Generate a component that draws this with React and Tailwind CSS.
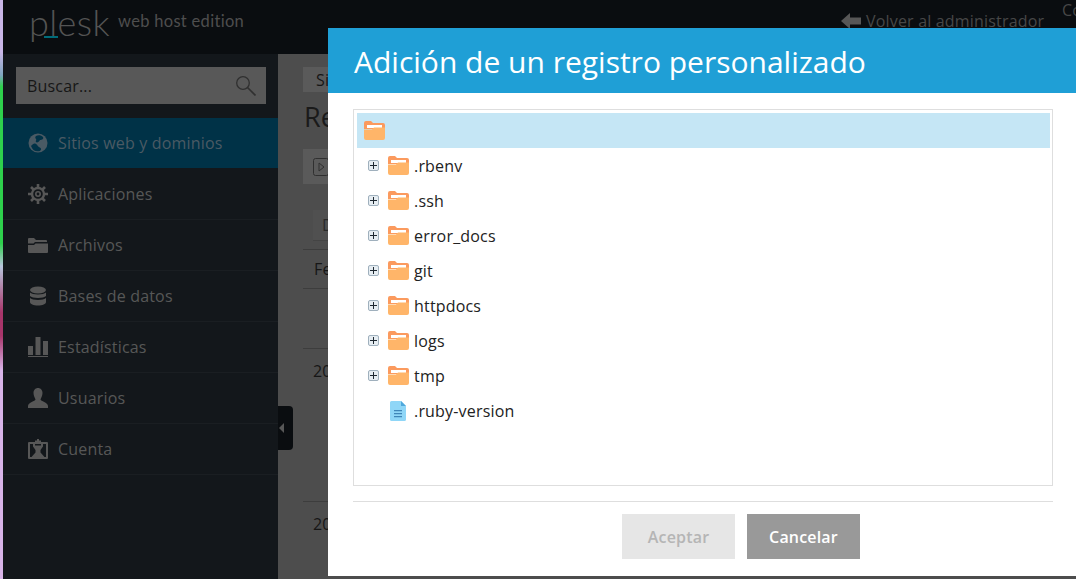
import React from 'react';

const SearchIcon = () => (
  <svg viewBox="0 0 20 20" className="h-5 w-5" fill="none" stroke="#303030">
    <circle cx="7" cy="7" r="6.300" strokeWidth="1.300" />
    <path d="M11.500 11.500l8 8" strokeWidth="1.700" />
  </svg>
);

const GlobeIcon = () => (
  <svg viewBox="0 0 20 20" className="h-5 w-5">
    <circle cx="10" cy="10" r="9.500" fill="#4a5a64" />
    <path d="M3 13c2-2 3-3 5-2s1 2 3 3 3 2 1 4c-4 1-7 0-9-5zM8 3c2-1 5-1 7 1 1 2-1 3-3 3-1 2-3 3-4 2s1-2 0-3-1-2 0-3z" fill="#003247" />
  </svg>
);

const GearIcon = () => (
  <svg viewBox="0 0 20 20" className="h-5 w-5" fill="none" stroke="#575757">
    <circle cx="10" cy="10" r="6" strokeWidth="2.400" />
    <circle cx="10" cy="10" r="2.200" strokeWidth="1.600" />
    <path d="M10 0v4M10 16v4M0 10h4M16 10h4M3 3l3 3M14 14l3 3M17 3l-3 3M6 14l-3 3" strokeWidth="2.600" />
  </svg>
);

const FolderIcon = () => (
  <svg viewBox="0 0 20 18" className="h-[18px] w-5" fill="#575757">
    <path d="M0 3a1 1 0 0 1 1-1h5l2 2h10a1 1 0 0 1 1 1v1H7L5.500 7.500H0z" />
    <path d="M0 9h6l1.500-1.500H20V16a1 1 0 0 1-1 1H1a1 1 0 0 1-1-1z" />
  </svg>
);

const DatabaseIcon = () => (
  <svg viewBox="0 0 20 20" className="h-5 w-5" fill="#575757">
    <ellipse cx="10" cy="4" rx="8" ry="3.500" />
    <path d="M2 6.500c2 2.500 14 2.500 16 0V10c-2 2.500-14 2.500-16 0zM2 12c2 2.500 14 2.500 16 0v4c0 2-3.500 3.500-8 3.500S2 18 2 16z" />
  </svg>
);

const ChartIcon = () => (
  <svg viewBox="0 0 20 20" className="h-5 w-5" fill="#575757">
    <path d="M0 9h5v9H0zM7.500 0h5v18h-5zM15 4h5v14h-5zM0 19h20v1H0z" />
  </svg>
);

const UserIcon = () => (
  <svg viewBox="0 0 20 20" className="h-5 w-5" fill="#575757">
    <path d="M10 0c2.800 0 4.500 2.200 4.500 5S13 10 12.500 11.500c0 1.500 7.500 3 7.500 6.500v2H0v-2c0-3.500 7.500-5 7.500-6.500C7 10 5.500 7.800 5.500 5S7.200 0 10 0z" />
  </svg>
);

const AccountIcon = () => (
  <svg viewBox="0 0 20 20" className="h-5 w-5" fill="#575757">
    <path fillRule="evenodd" d="M1 3h6V1.500h2V0h2v1.500h2V3h6a1 1 0 0 1 1 1v15a1 1 0 0 1-1 1H1a1 1 0 0 1-1-1V4a1 1 0 0 1 1-1zm1 2v13h1.500l4-4.500V11L5 7.500V5zm16 0h-3v2.500L12.500 11v2.500l4 4.500H18zM7 5v1.500h6V5z" />
  </svg>
);

const TreeFolder = () => (
  <svg viewBox="0 0 21 19" className="h-[19px] w-[21px] shrink-0">
    <path d="M0 2a2 2 0 0 1 2-2h5l2 2h10a2 2 0 0 1 2 2v4H0z" fill="#fb9a5e" />
    <path d="M3 4h15v3H3z" fill="#fff" />
    <path d="M0 8.500 8 8.500 10 6.500H21V17a2 2 0 0 1-2 2H2a2 2 0 0 1-2-2z" fill="#ffb569" />
  </svg>
);

const TreeFile = () => (
  <svg viewBox="0 0 16 20" className="h-5 w-4 shrink-0">
    <path d="M1.500 0H11l5 5v13.500a1.500 1.500 0 0 1-1.500 1.500h-13A1.500 1.500 0 0 1 0 18.500v-17A1.500 1.500 0 0 1 1.500 0z" fill="#8fd6f7" />
    <path d="M11 0l5 5h-5z" fill="#4fa8dc" />
    <path d="M4 9h8v1.300H4zM4 12h8v1.300H4zM4 15h8v1.300H4z" fill="#3f86b8" />
  </svg>
);

const PlusBox = () => (
  <span className="flex h-[11px] w-[11px] shrink-0 items-center justify-center rounded-[2px] border border-[#9fb0bd] bg-[#e6edf2]">
    <svg viewBox="0 0 7 7" className="h-[7px] w-[7px]">
      <path d="M3 0h1v3h3v1H4v3H3V4H0V3h3z" fill="#1d2730" />
    </svg>
  </span>
);

const navItems = [
  { label: 'Aplicaciones', icon: GearIcon },
  { label: 'Archivos', icon: FolderIcon },
  { label: 'Bases de datos', icon: DatabaseIcon },
  { label: 'Estadísticas', icon: ChartIcon },
  { label: 'Usuarios', icon: UserIcon },
  { label: 'Cuenta', icon: AccountIcon },
];

const folders = ['.rbenv', '.ssh', 'error_docs', 'git', 'httpdocs', 'logs', 'tmp'];

const Sidebar = () => (
  <aside className="flex w-[275px] shrink-0 flex-col bg-[#13171b]">
    <div className="pl-[13px] pr-[12px] pt-[13px]">
      <div className="flex h-[37px] items-center justify-between bg-[#585858] pl-[11px] pr-[10px] text-base text-[#161616]">
        <span>Buscar...</span>
        <SearchIcon />
      </div>
    </div>
    <div className="mb-px mt-[14px] flex h-[50px] items-center gap-[10px] bg-[#003247] pl-[25px] text-base text-[#4a5a64]">
      <GlobeIcon />
      <span>Sitios web y dominios</span>
    </div>
    {navItems.map(({ label, icon: Icon }) => (
      <div key={label} className="flex h-[51px] items-center gap-[10px] border-b border-[#1a1e22] pl-[25px] text-base text-[#575757]">
        <Icon />
        <span>{label}</span>
      </div>
    ))}
  </aside>
);

const PageBehind = () => (
  <main className="relative flex-1 bg-[#4d4d4d] pl-[25px] text-[#161616]">
    <div className="mt-[13px] flex h-[25px] w-[60px] items-center bg-[#5a5a5a] pl-[13px] text-base">Si</div>
    <h1 className="mt-[7px] pl-px text-[27px] leading-[36px] text-[#1a1a1a]">Re</h1>
    <div className="mt-[14px] flex h-[35px] w-[60px] items-center bg-[#5a5a5a] pl-[10px]">
      <svg viewBox="0 0 16 18" className="h-[18px] w-4" fill="none" stroke="#303030">
        <rect x="0.500" y="0.500" width="15" height="17" rx="2" />
        <path d="M6 5l5 4-5 4z" />
      </svg>
    </div>
    <div className="ml-[10px] mt-[26px] flex h-[31px] w-[40px] items-center border-b border-[#444] bg-[#505050] pl-[9px] text-base text-[#2a2a2a]">D</div>
    <div className="mt-[8px] border-t border-[#3d3d3d] py-[8px] pl-[11px] text-base leading-[22px]">Fe</div>
    <div className="h-[60px] border-t border-[#3d3d3d]" />
    <div className="h-[153px] border-t border-[#3d3d3d] pl-[10px] pt-[10px] text-base">20</div>
    <div className="border-t border-[#3d3d3d] pl-[10px] pt-[10px] text-base">20</div>
    {/* sidebar collapse handle */}
    <div className="absolute left-0 top-[352px] flex h-[44px] w-[15px] items-center rounded-r bg-[#0a0d10] pl-[1px]">
      <span className="h-0 w-0 border-y-[5px] border-r-[5px] border-y-transparent border-r-[#575757]" />
    </div>
  </main>
);

const Dialog = () => (
  <div className="absolute left-[328px] top-[28px] flex h-[548px] w-[748px] flex-col bg-white">
    <div className="flex h-[65px] shrink-0 items-center bg-[#1f9fd6] pl-[26px] pt-px text-[30px] tracking-normal text-white">
      Adición de un registro personalizado
    </div>
    <div className="ml-[25px] mr-[23px] mt-4 h-[377px] border border-[#dedede] py-[3px] pl-[3px] pr-[2px] text-base text-[#222]">
      <div className="flex h-[35px] items-center bg-[#c5e6f5] pl-[7px]">
        <TreeFolder />
      </div>
      {folders.map((name) => (
        <div key={name} className="flex h-[35px] items-center">
          <span className="ml-[11px] mr-[9px]"><PlusBox /></span>
          <TreeFolder />
          <span className="ml-[5px]">{name}</span>
        </div>
      ))}
      <div className="flex h-[35px] items-center pl-[33px]">
        <TreeFile />
        <span className="ml-[8px]">.ruby-version</span>
      </div>
    </div>
    <div className="ml-[25px] mr-[23px] mt-[15px] flex flex-1 gap-3 border-t border-[#dedede] pl-[269px] pt-3 text-base font-semibold">
      <div className="flex h-[45px] w-[113px] items-center justify-center bg-[#e6e6e6] text-[#b5b5b5]">Aceptar</div>
      <div className="flex h-[45px] w-[113px] items-center justify-center bg-[#999999] text-white">Cancelar</div>
    </div>
  </div>
);

const App = () => (
  <div className="relative flex h-[579px] w-[1076px] overflow-hidden bg-[#2b2b2b] font-['Open_Sans',sans-serif] tracking-[0.18px]">
    {/* bit of desktop showing at the window edge */}
    <div className="w-[3px] shrink-0 bg-[linear-gradient(to_bottom,#c9b6e6_0%,#c9b6e6_9%,#7fa6c0_13%,#2ed14c_15%,#2ed14c_42%,#b8c5dc_46%,#a8356a_54%,#a8356a_58%,#d8b4e8_64%,#d8b4e8_100%)]" />
    <div className="flex min-w-0 flex-1 flex-col">
      <header className="relative flex h-[54px] shrink-0 items-start bg-[#0a0d10] pl-[26px]">
        <div className="relative h-[54px] font-['Lato',sans-serif] text-[36px] font-light leading-[44px] tracking-[0.4px] text-[#545454]">
          plesk
          <span className="absolute left-[15px] top-[36px] h-[2px] w-[14px] bg-[#006c7a]" />
        </div>
        <div className="ml-[8px] mt-[11px] font-['Lato',sans-serif] text-[16.500px] leading-5 tracking-[0.3px] text-[#4e4e4e]">web host edition</div>
        <div className="absolute left-[838px] top-[11px] flex items-center gap-[5px] text-base leading-5 text-[#474747]">
          <svg viewBox="0 0 20 16" className="h-4 w-5" fill="#575757">
            <path d="M0 8l9-8v4.500h11v7H9V16z" />
          </svg>
          Volver al administrador
        </div>
        <div className="absolute left-[1059px] top-0 w-[14px] overflow-hidden text-base leading-5 text-[#474747]">Co</div>
      </header>
      <div className="flex min-h-0 flex-1">
        <Sidebar />
        <PageBehind />
      </div>
    </div>
    <Dialog />
  </div>
);

export default App;
